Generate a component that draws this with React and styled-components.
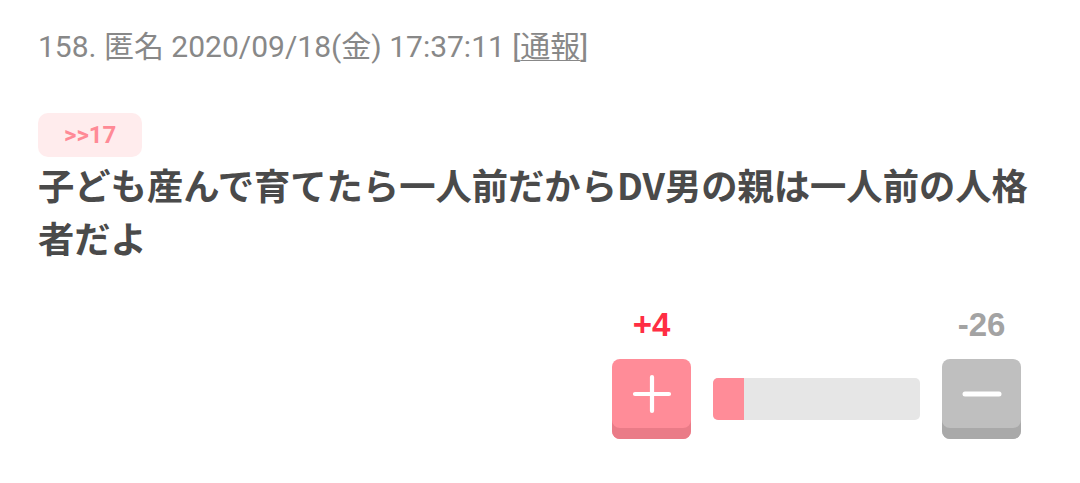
import React from "react";
import styled, { createGlobalStyle } from "styled-components";

const Global = createGlobalStyle`
  html, body { margin: 0; padding: 0; background: #fff; }
  body { font-family: Roboto, "Noto Sans CJK JP", sans-serif; }
`;

const Page = styled.div`
  padding: 26px 38px 30px;
  width: 1080px;
  box-sizing: border-box;
`;

const Meta = styled.div`
  font-size: 30px;
  line-height: 42px;
  color: #888;
`;

const Report = styled.span`
  span { text-decoration: underline; text-underline-offset: 3px; text-decoration-thickness: 1px; }
`;

const Anchor = styled.div`
  display: inline-flex;
  align-items: center;
  height: 44px;
  padding: 0 26px;
  margin-top: 45px;
  border-radius: 10px;
  background: #ffeced;
  color: #ff8a96;
  font-weight: 700;
  font-size: 24px;
`;

const Body = styled.p`
  margin: 1px 0 0;
  font-size: 36.3px;
  line-height: 53px;
  font-weight: 700;
  color: #4a4a4a;
  font-family: "Noto Sans CJK JP", sans-serif;
`;

const Votes = styled.div`
  display: grid;
  grid-template-columns: 79px 207px 79px;
  grid-template-rows: auto auto;
  column-gap: 22px;
  row-gap: 16px;
  justify-content: end;
  margin-top: 43px;
  margin-right: 21px;
`;

const Count = styled.div`
  grid-row: 1;
  grid-column: ${(p) => (p.$plus ? 1 : 3)};
  text-align: center;
  font-family: "Liberation Sans", Arial, sans-serif;
  font-weight: 700;
  font-size: 33px;
  line-height: 36px;
  color: ${(p) => (p.$plus ? "#ff2e43" : "#a3a3a3")};
`;

const VoteButton = styled.button`
  grid-row: 2;
  width: 79px;
  height: 80px;
  border: 0;
  padding: 0 0 11px;
  border-radius: 8px;
  display: flex;
  align-items: center;
  justify-content: center;
  background: ${(p) => (p.$plus ? "#ff8c98" : "#bfbfbf")};
  box-shadow: inset 0 -11px 0 ${(p) => (p.$plus ? "#ea7b87" : "#a9a9a9")};
  cursor: pointer;
`;

const Bar = styled.div`
  grid-row: 2;
  grid-column: 2;
  align-self: center;
  height: 42px;
  border-radius: 5px;
  background: #e6e6e6;
  overflow: hidden;
  display: flex;
`;

const Fill = styled.div`
  background: #ff8c98;
  height: 100%;
`;

const PlusIcon = () => (
  <svg width="40" height="40" viewBox="0 0 40 40">
    <path d="M20 3v34M3 20h34" stroke="#fff" strokeWidth="4.2" strokeLinecap="round" />
  </svg>
);

const MinusIcon = () => (
  <svg width="40" height="40" viewBox="0 0 40 40">
    <path d="M3 20h34" stroke="#fff" strokeWidth="5" strokeLinecap="round" />
  </svg>
);

export default function App() {
  const plus = 4;
  const minus = 26;
  const ratio = 0.15;
  return (
    <Page>
      <Global />
      <Meta>
        158. 匿名 2020/09/18(金) 17:37:11{" "}
        <Report>
          [<span>通報</span>]
        </Report>
      </Meta>
      <Anchor>&gt;&gt;17</Anchor>
      <Body>子ども産んで育てたら一人前だからDV男の親は一人前の人格者だよ</Body>
      <Votes>
        <Count $plus>+{plus}</Count>
        <Count>-{minus}</Count>
        <VoteButton $plus aria-label="plus">
          <PlusIcon />
        </VoteButton>
        <Bar>
          <Fill style={{ width: `${ratio * 100}%` }} />
        </Bar>
        <VoteButton aria-label="minus">
          <MinusIcon />
        </VoteButton>
      </Votes>
    </Page>
  );
}
